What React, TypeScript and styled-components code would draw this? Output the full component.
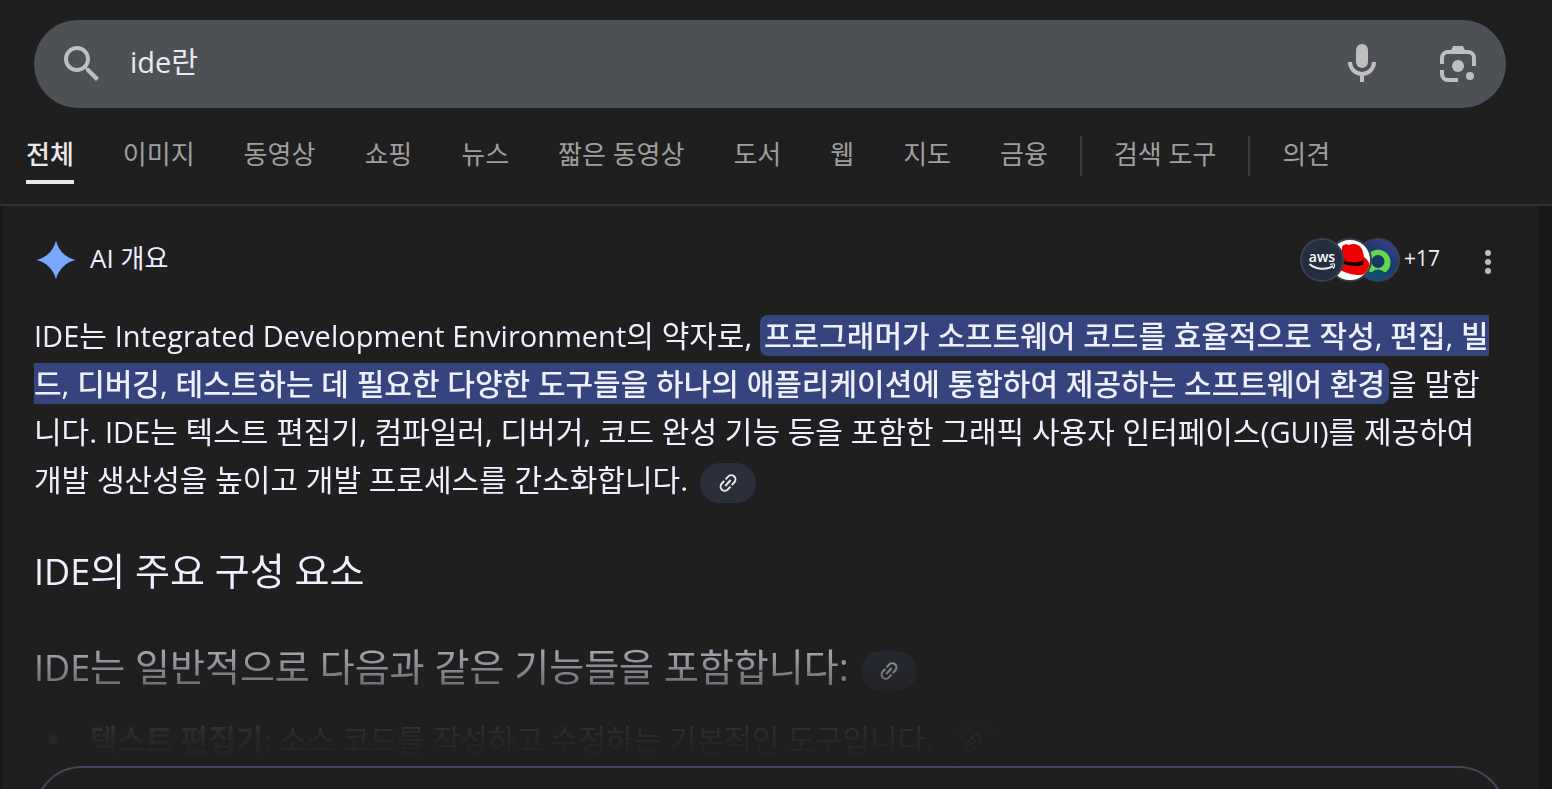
import React from "react";
import styled, { createGlobalStyle } from "styled-components";

const GlobalStyle = createGlobalStyle`
  *, *::before, *::after { box-sizing: border-box; }
  body {
    margin: 0;
    background: #1f1f1f;
    color: #eef0ff;
    font-family: "Open Sans", "Noto Sans CJK KR", sans-serif;
  }
`;

const Page = styled.div`
  display: flex;
  flex-direction: column;
  height: 100vh;
  overflow: hidden;
`;

const Header = styled.header`
  flex: none;
  padding: 20px 46px 0 34px;
`;

const SearchBar = styled.form`
  display: flex;
  align-items: center;
  height: 88px;
  padding: 0 24px;
  border-radius: 44px;
  background: #4d5156;
`;

const SearchInput = styled.input`
  flex: 1;
  min-width: 0;
  height: 48px;
  margin: 0 24px;
  padding: 0 0 8px;
  border: 0;
  outline: 0;
  background: transparent;
  color: #e8eaed;
  font: inherit;
  font-size: 29px;
  line-height: 40px;
`;

const IconButton = styled.button<{ $gap?: number }>`
  display: flex;
  flex: none;
  margin: 0 0 0 ${(p) => p.$gap ?? 0}px;
  padding: 0;
  border: 0;
  background: none;
  color: #bfbfbf;
`;

const Tabs = styled.nav`
  display: flex;
  flex: none;
  height: 98px;
  padding: 26px 26px 0;
  gap: 49px;
  border-bottom: 2px solid #333333;
`;

const Tab = styled.a<{ $active?: boolean }>`
  height: 50px;
  border-bottom: 4px solid ${(p) => (p.$active ? "#e8e8e8" : "transparent")};
  color: ${(p) => (p.$active ? "#e8e8e8" : "#9e9e9e")};
  font-size: 26px;
  font-weight: ${(p) => (p.$active ? 500 : 400)};
  line-height: 40px;
  text-decoration: none;
  white-space: nowrap;
`;

const TabDivider = styled.span`
  width: 2px;
  height: 40px;
  margin: 2px -17px 0;
  background: #3a3a3a;
`;

const Body = styled.main`
  flex: 1;
  min-height: 0;
  padding: 0 14px 0 2px;
  background: #171717;
`;

const Overview = styled.section`
  height: 100%;
  padding: 30px 32px 0;
  overflow: hidden;
  background: #1f1f1f;
`;

const OverviewHeader = styled.div`
  display: flex;
  align-items: center;
  height: 48px;
  margin-right: -6px;
`;

const OverviewTitle = styled.h1`
  flex: 1;
  margin: 0;
  padding: 0 0 4px 12px;
  font-size: 26px;
  font-weight: 400;
  line-height: 40px;
`;

const Sources = styled.button`
  display: flex;
  align-items: center;
  padding: 0;
  border: 0;
  background: none;
  color: inherit;
  font: inherit;
`;

const SourceIcon = styled.svg<{ $order: number }>`
  position: relative;
  z-index: ${(p) => p.$order};
  display: block;
  margin-right: -16px;
`;

const SourceCount = styled.span`
  padding: 0 0 4px 20px;
  font-size: 21px;
  line-height: 32px;
`;

const Fade = styled.div`
  height: 480px;
  margin-top: 28px;
  mask-image: linear-gradient(
    #000 290px,
    rgba(0, 0, 0, 0.66) 336px,
    rgba(0, 0, 0, 0.38) 373px,
    rgba(0, 0, 0, 0.06) 420px,
    transparent 452px
  );
`;

const Paragraph = styled.p`
  margin: 0;
  font-size: 30px;
  line-height: 48px;
`;

const Latin = styled.span<{ $size?: number }>`
  font-size: ${(p) => p.$size ?? 29}px;
  line-height: 1;
`;

const Highlight = styled.mark`
  padding: 0 4px;
  border-radius: 8px;
  background: #35447d;
  color: inherit;
  font-weight: 500;
`;

const Heading = styled.h2`
  margin: 40px 0 0;
  font-size: 38px;
  font-weight: 400;
  line-height: 56px;

  ${Paragraph} + & {
    margin-top: 38px;
  }
`;

const List = styled.ul`
  margin: 22px 0 0;
  padding: 0;
  list-style: none;
`;

const Item = styled.li`
  display: flex;
  align-items: center;
  font-size: 30px;
  line-height: 48px;

  &::before {
    content: "";
    width: 10px;
    height: 10px;
    margin: 0 32px 0 14px;
    border-radius: 50%;
    background: currentColor;
  }
`;

const Chip = styled.button`
  display: inline-flex;
  align-items: center;
  justify-content: center;
  width: 56px;
  height: 40px;
  margin: 0 0 0 12px;
  padding: 0;
  border: 0;
  border-radius: 20px;
  background: #2b2f3c;
  color: #e8e8e8;
  vertical-align: middle;
`;

const MoreButton = styled.button`
  display: block;
  width: 100%;
  height: 96px;
  margin-top: -26px;
  border: 2px solid #444759;
  border-radius: 48px;
  background: #1f1f1f;
`;

const SearchIcon = () => (
  <svg width="48" height="48" viewBox="0 0 24 24" fill="currentColor">
    <path d="M15.5 14h-.79l-.28-.27C15.41 12.59 16 11.11 16 9.5 16 5.91 13.09 3 9.5 3S3 5.91 3 9.5 5.91 16 9.5 16c1.61 0 3.09-.59 4.23-1.57l.27.28v.79l5 4.99L20.49 19l-4.99-5zm-6 0C7.01 14 5 11.99 5 9.5S7.01 5 9.5 5 14 7.01 14 9.5 11.99 14 9.5 14z" />
  </svg>
);

const MicIcon = () => (
  <svg width="48" height="48" viewBox="0 0 24 24" fill="none" stroke="currentColor" strokeWidth="2">
    <rect x="9" y="2" width="6" height="12" rx="3" fill="currentColor" stroke="none" />
    <path d="M6 11a6 6 0 0 0 12 0M12 17v4" />
  </svg>
);

const LensIcon = () => (
  <svg width="48" height="48" viewBox="0 0 24 24" fill="none" stroke="currentColor" strokeWidth="2">
    <path d="M4 12V9a3 3 0 0 1 3-3h10a3 3 0 0 1 3 3v4M4 15v2a3 3 0 0 0 3 3h5" />
    <path d="M8.400 5.200 9.600 3h4.800l1.200 2.200z" fill="currentColor" stroke="none" />
    <circle cx="12" cy="13" r="3" fill="currentColor" stroke="none" />
    <circle cx="18" cy="18" r="2" fill="currentColor" stroke="none" />
  </svg>
);

const SparkIcon = () => (
  <svg width="44" height="44" viewBox="0 0 44 44" fill="#78a9ff">
    <path d="M22 2.500C24 12 32 20 41.500 22 32 24 24 32 22 41.500 20 32 12 24 2.500 22 12 20 20 12 22 2.500Z" />
  </svg>
);

const LinkIcon = () => (
  <svg width="24" height="24" viewBox="0 0 24 24" fill="none" stroke="currentColor" strokeWidth="2">
    <g transform="rotate(-48 12 12)">
      <path d="M11 7.800H7.200a4.200 4.200 0 0 0 0 8.400H11M13 7.800h3.800a4.200 4.200 0 0 1 0 8.400H13M8 12h8" />
    </g>
  </svg>
);

const MoreIcon = () => (
  <svg width="48" height="48" viewBox="0 0 48 48" fill="currentColor">
    <circle cx="24" cy="17" r="3" />
    <circle cx="24" cy="26" r="3" />
    <circle cx="24" cy="35" r="3" />
  </svg>
);

const AwsIcon = () => (
  <SourceIcon $order={3} width="44" height="44" viewBox="0 0 44 44">
    <circle cx="22" cy="22" r="21" fill="#232f3e" stroke="#3b3f52" strokeWidth="2" />
    <text x="22" y="24" textAnchor="middle" fill="#fff" fontFamily="Open Sans, sans-serif" fontSize="14" fontWeight="600">aws</text>
    <path d="M9.500 26c6 5.500 17 6.500 23.500 2" fill="none" stroke="#e8e8e8" strokeWidth="2" />
    <path d="M30 26.500c2-.8 4.300-.8 4.500-.1.300.9-.4 3-1.600 4.200" fill="none" stroke="#e8e8e8" strokeWidth="1.300" />
  </SourceIcon>
);

const HatIcon = () => (
  <SourceIcon $order={2} width="44" height="44" viewBox="0 0 44 44">
    <defs>
      <clipPath id="hat-clip"><circle cx="22" cy="22" r="20" /></clipPath>
    </defs>
    <circle cx="22" cy="22" r="21" fill="#fff" stroke="#3b3f52" strokeWidth="2" />
    <g clipPath="url(#hat-clip)">
      <path d="M14 9c1-2.500 4-3.500 7-2 3-1.500 7-1 9.500.500 3 1.500 4.500 5 5.500 11.500 3.500 2.500 6 6 6 10-2 6-6 8.500-13 8-7-.5-13-2.500-20-7v-8l4-2z" fill="#ee0000" />
      <path d="M12 20c6 4.500 16 6 24 2l-.500 4.500c-8 3-18 1.500-24-3z" fill="#190000" />
    </g>
  </SourceIcon>
);

const RingIcon = () => (
  <SourceIcon $order={1} width="44" height="44" viewBox="0 0 44 44">
    <defs>
      <linearGradient id="ring-bg" x1="1" y1="0" x2="0.300" y2="1">
        <stop offset="0.100" stopColor="#3b3f9c" />
        <stop offset="0.450" stopColor="#1c3a6e" />
        <stop offset="1" stopColor="#0d5670" />
      </linearGradient>
    </defs>
    <circle cx="22" cy="22" r="21" fill="url(#ring-bg)" stroke="#3b3f52" strokeWidth="2" />
    <path
      d="M13.500 33.500a12.500 12.500 0 1 1 17 0q-1.500 1.200-3 0a8.500 8.500 0 0 0-11 0q-1.500 1.200-3 0z"
      fill="#62d84e"
    />
    <circle cx="22" cy="23.500" r="6.500" fill="#143a63" />
  </SourceIcon>
);

const LinkChip = () => (
  <Chip type="button" aria-label="관련 링크 보기">
    <LinkIcon />
  </Chip>
);

const tabs = ["전체", "이미지", "동영상", "쇼핑", "뉴스", "짧은 동영상", "도서", "웹", "지도", "금융"];

export default function App() {
  return (
    <>
      <GlobalStyle />
      <Page>
        <Header>
          <SearchBar role="search">
            <IconButton type="submit" aria-label="검색">
              <SearchIcon />
            </IconButton>
            <SearchInput aria-label="검색어" defaultValue="ide란" />
            <IconButton type="button" aria-label="음성 검색">
              <MicIcon />
            </IconButton>
            <IconButton type="button" aria-label="이미지로 검색" $gap={48}>
              <LensIcon />
            </IconButton>
          </SearchBar>
        </Header>
        <Tabs>
          {tabs.map((label, i) => (
            <Tab key={label} href="#" $active={i === 0}>
              {label}
            </Tab>
          ))}
          <TabDivider />
          <Tab href="#">검색 도구</Tab>
          <TabDivider />
          <Tab href="#">의견</Tab>
        </Tabs>
        <Body>
          <Overview>
            <OverviewHeader>
              <SparkIcon />
              <OverviewTitle>AI 개요</OverviewTitle>
              <Sources type="button">
                <AwsIcon />
                <HatIcon />
                <RingIcon />
                <SourceCount>+17</SourceCount>
              </Sources>
              <IconButton type="button" aria-label="더보기 메뉴" $gap={24}>
                <MoreIcon />
              </IconButton>
            </OverviewHeader>
            <Fade>
              <Paragraph>
                <Latin>IDE</Latin>는 <Latin>Integrated Development Environment</Latin>의 약자로,{" "}
                <Highlight>
                  프로그래머가 소프트웨어 코드를 효율적으로 작성, 편집, 빌드, 디버깅, 테스트하는 데 필요한 다양한
                  도구들을 하나의 애플리케이션에 통합하여 제공하는 소프트웨어 환경
                </Highlight>
                을 말합니다. <Latin>IDE</Latin>는 텍스트 편집기, 컴파일러, 디버거, 코드 완성 기능 등을 포함한 그래픽
                사용자 인터페이스(<Latin>GUI</Latin>)를 제공하여 개발 생산성을 높이고 개발 프로세스를 간소화합니다.
                <LinkChip />
              </Paragraph>
              <Heading>
                <Latin $size={36}>IDE</Latin>의 주요 구성 요소
              </Heading>
              <Heading>
                <Latin $size={36}>IDE</Latin>는 일반적으로 다음과 같은 기능들을 포함합니다:
                <LinkChip />
              </Heading>
              <List>
                <Item>
                  <span>
                    <strong>텍스트 편집기</strong>: 소스 코드를 작성하고 수정하는 기본적인 도구입니다.
                    <LinkChip />
                  </span>
                </Item>
              </List>
            </Fade>
            <MoreButton type="button" aria-label="더보기" />
          </Overview>
        </Body>
      </Page>
    </>
  );
}
